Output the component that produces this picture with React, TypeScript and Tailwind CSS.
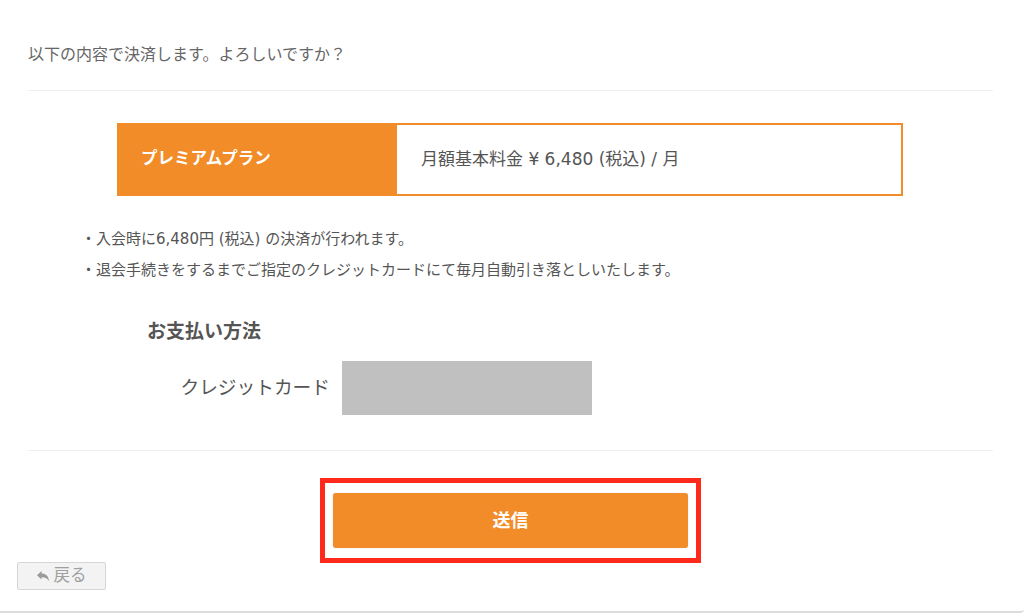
import React from 'react';

const ORANGE = 'bg-[#f28c29]';

function ReplyIcon() {
  return (
    <svg width="12" height="11" viewBox="0 0 12 11" className="fill-[#9a9a9a]">
      <path d="M0 4.2 L4.6 0 V2.6 C8.6 2.6 11.4 4.6 12 10.2 C10.6 7.4 8.4 6.2 4.6 6.2 V8.6 Z" />
    </svg>
  );
}

export default function App() {
  return (
    <div className="h-[613px] w-full bg-white font-['DejaVu_Sans','Noto_Sans_CJK_JP',sans-serif]">
      <div className="h-[613px] w-full rounded-br-[4px] border-b-2 border-[#dcdcdc] bg-white">
        <div className="pl-[28px] pr-[31px] pt-[44px]">
          {/* confirmation message */}
          <p className="text-[16px] leading-[22px] text-[#666]">以下の内容で決済します。よろしいですか？</p>
          <div className="mt-[24px] h-px bg-[#efefef]" />

          {/* plan */}
          <div className="ml-[89px] mr-[90px] mt-[32px] flex h-[73px] border-2 border-[#f28c29]">
            <div className={`${ORANGE} flex w-[278px] items-center pl-[22px] text-[16.5px] font-bold text-white`}>
              プレミアムプラン
            </div>
            <div className="flex flex-1 items-center pl-[24px] text-[17px] text-[#555]">
              月額基本料金 ¥ 6,480 (税込) / 月
            </div>
          </div>

          {/* notes */}
          <ul className="mt-[28px] pl-[53px] text-[15px] leading-[31px] text-[#555]">
            <li>・入会時に6,480円 (税込) の決済が行われます。</li>
            <li>・退会手続きをするまでご指定のクレジットカードにて毎月自動引き落としいたします。</li>
          </ul>

          {/* payment method */}
          <h3 className="mt-[32px] pl-[119px] text-[19px] font-bold leading-[26px] text-[#555]">お支払い方法</h3>
          <div className="mt-[17px] flex items-center pl-[152px]">
            <span className="w-[150px] text-right text-[18.7px] text-[#555]">クレジットカード</span>
            <div className="ml-[12px] h-[54px] w-[250px] bg-[#c0c0c0]" />
          </div>

          <div className="mt-[35px] h-px bg-[#efefef]" />

          {/* submit */}
          <div className="mt-[27px] flex justify-center">
            <div className="flex h-[85px] w-[381px] items-center justify-center border-[5px] border-[#ff2a1c] bg-white">
              <button
                type="button"
                className={`${ORANGE} h-[55px] w-[355px] rounded-[3px] text-[18px] font-bold text-white shadow-[0_0_1px_rgba(0,0,0,0.25)]`}
              >
                送信
              </button>
            </div>
          </div>
        </div>

        {/* back */}
        <div className="-mt-px pl-[17px]">
          <button
            type="button"
            className="flex h-[28px] w-[89px] items-center justify-center gap-[5px] rounded-[2px] border border-[#d6d6d6] bg-[#f3f3f3] text-[16.5px] text-[#a0a0a0]"
          >
            <ReplyIcon />
            戻る
          </button>
        </div>
      </div>
    </div>
  );
}
